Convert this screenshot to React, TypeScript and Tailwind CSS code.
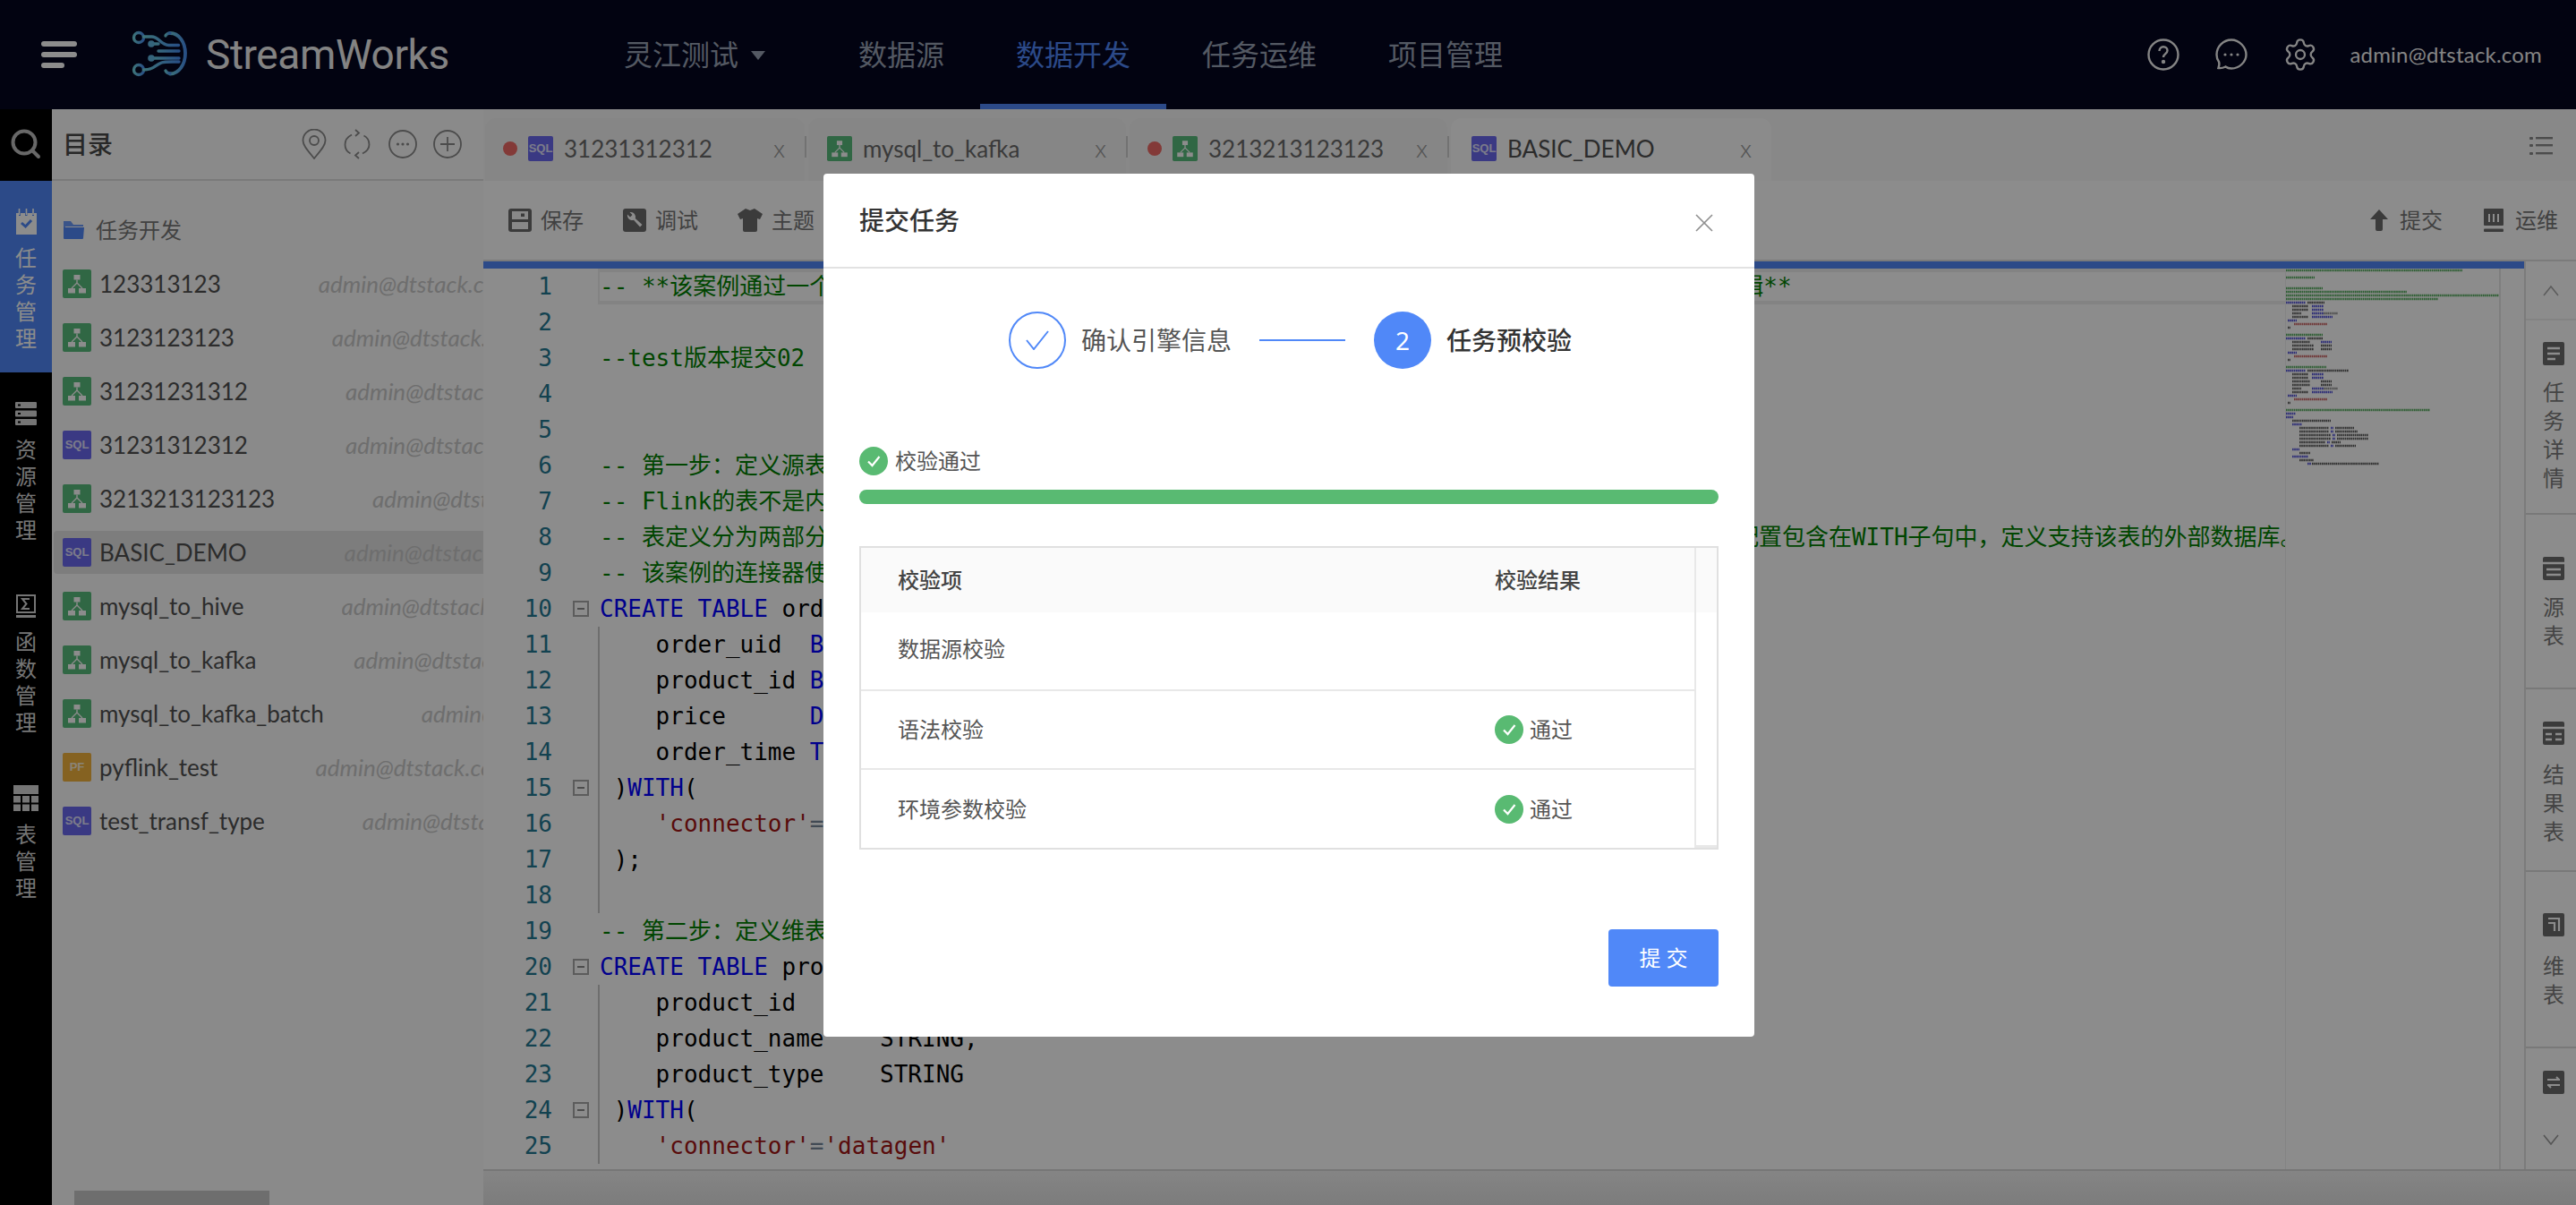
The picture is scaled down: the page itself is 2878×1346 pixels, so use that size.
import React from 'react';
import { Settings } from 'lucide-react';

type Seg = [string, string];

const C = 'text-[#008000]';
const K = 'text-[#0000ff]';
const S = 'text-[#a31515]';
const T = 'text-black';
const O = 'text-[#778899]';

const codeLines: { segs: Seg[]; fold?: boolean; guide?: boolean; active?: boolean }[] = [
  { segs: [['-- **该案例通过一个电商订单与商品维表关联后写入宽表的场景，并演示源表、维表、结果表的定义和转换逻辑**', C]], active: true },
  { segs: [] },
  { segs: [['--test版本提交02', C]] },
  { segs: [] },
  { segs: [] },
  { segs: [['-- 第一步：定义源表', C]] },
  { segs: [['-- Flink的表不是内部存储数据的，而是指向外部系统', C]] },
  { segs: [['-- 表定义分为两部分：逻辑结构与物理结构在同一条语句中声明，其中字段名称、类型和约束定义逻辑结构，配置包含在WITH子句中，定义支持该表的外部数据库。', C]] },
  { segs: [['-- 该案例的连接器使用datagen生成随机数据', C]] },
  { segs: [['CREATE TABLE', K], [' orders (', T]], fold: true },
  { segs: [['    order_uid  ', T], ['BIGINT', K], [',', T]], guide: true },
  { segs: [['    product_id ', T], ['BIGINT', K], [',', T]], guide: true },
  { segs: [['    price      ', T], ['DECIMAL', K], ['(32,2),', T]], guide: true },
  { segs: [['    order_time ', T], ['TIMESTAMP', K], ['(3)', T]], guide: true },
  { segs: [[' )', T], ['WITH', K], ['(', T]], fold: true, guide: true },
  { segs: [['    ', T], ["'connector'", S], ['=', O], ["'datagen'", S]], guide: true },
  { segs: [[' );', T]], guide: true },
  { segs: [], guide: true },
  { segs: [['-- 第二步：定义维表', C]] },
  { segs: [['CREATE TABLE', K], [' products (', T]], fold: true },
  { segs: [['    product_id     ', T], ['BIGINT', K], [',', T]], guide: true },
  { segs: [['    product_name    STRING,', T]], guide: true },
  { segs: [['    product_type    STRING', T]], guide: true },
  { segs: [[' )', T], ['WITH', K], ['(', T]], fold: true, guide: true },
  { segs: [['    ', T], ["'connector'", S], ['=', O], ["'datagen'", S]], guide: true },
];

const files: { name: string; mail: string; type: 'flow' | 'sql' | 'pf'; selected?: boolean }[] = [
  { name: '123313123', mail: 'admin@dtstack.com', type: 'flow' },
  { name: '3123123123', mail: 'admin@dtstack.com', type: 'flow' },
  { name: '31231231312', mail: 'admin@dtstack.com', type: 'flow' },
  { name: '31231312312', mail: 'admin@dtstack.com', type: 'sql' },
  { name: '3213213123123', mail: 'admin@dtstack.com', type: 'flow' },
  { name: 'BASIC_DEMO', mail: 'admin@dtstack.com', type: 'sql', selected: true },
  { name: 'mysql_to_hive', mail: 'admin@dtstack.com', type: 'flow' },
  { name: 'mysql_to_kafka', mail: 'admin@dtstack.com', type: 'flow' },
  { name: 'mysql_to_kafka_batch', mail: 'admin@dtstack.com', type: 'flow' },
  { name: 'pyflink_test', mail: 'admin@dtstack.com', type: 'pf' },
  { name: 'test_transf_type', mail: 'admin@dtstack.com', type: 'sql' },
];

const tabs = [
  { name: '31231312312', type: 'sql' as const, dot: true, w: 'w-[357px]' },
  { name: 'mysql_to_kafka', type: 'flow' as const, dot: false, w: 'w-[355px]' },
  { name: '3213213123123', type: 'flow' as const, dot: true, w: 'w-[355px]' },
];

// minimap rows: [line, startX, endX, colour], measured on the reference
const G = '#2f9a3a';
const B = '#2a2ad0';
const D = '#333333';
const R = '#c04040';
const miniRows: [number, number, number, string][] = [
  [1, 0, 197, G], [3, 0, 32, G], [6, 0, 41, G], [7, 0, 135, G], [8, 0, 238, G], [9, 0, 170, G],
  [10, 0, 22, B], [10, 24, 43, D], [11, 7, 25, D], [11, 29, 42, B], [12, 7, 25, D], [12, 29, 42, B],
  [13, 7, 17, D], [13, 29, 42, B], [13, 42, 58, '#777777'], [14, 7, 25, D], [14, 29, 52, B], [15, 2, 12, B],
  [16, 9, 46, R], [17, 2, 5, D], [19, 0, 41, G], [20, 0, 22, B], [20, 24, 41, D], [21, 7, 27, D], [21, 39, 51, B],
  [22, 7, 31, D], [22, 39, 51, D], [23, 7, 31, D], [23, 39, 51, D], [24, 2, 12, B], [25, 9, 46, R], [26, 2, 5, D],
  [28, 0, 45, G], [29, 0, 22, B], [29, 24, 70, D], [30, 7, 25, D], [30, 29, 42, B], [31, 7, 25, D], [31, 29, 42, B],
  [32, 7, 27, D], [32, 39, 51, D], [33, 7, 27, D], [33, 39, 51, D], [34, 7, 17, D], [34, 29, 42, B], [34, 42, 58, '#777777'],
  [35, 7, 25, D], [35, 29, 52, B], [36, 2, 12, B], [37, 9, 46, R], [38, 2, 5, D], [40, 0, 161, G], [41, 0, 11, B], [42, 0, 8, B],
  [43, 7, 50, D], [44, 7, 18, B], [45, 15, 48, D], [45, 50, 53, B], [45, 55, 76, D], [46, 15, 48, D], [46, 50, 53, B], [46, 55, 80, D],
  [47, 15, 50, D], [47, 52, 55, B], [47, 57, 92, D], [48, 15, 50, D], [48, 52, 55, B], [48, 57, 92, D], [49, 15, 44, D], [49, 46, 49, B], [49, 51, 61, D],
  [50, 15, 48, D], [50, 50, 53, B], [50, 55, 78, D], [51, 7, 15, B], [52, 15, 27, D], [53, 7, 25, B], [54, 15, 31, D], [55, 24, 28, B], [55, 29, 104, D],
];

function FlowIcon({ size = 'w-[32px] h-[32px]' }: { size?: string }) {
  return (
    <svg viewBox="0 0 32 32" className={`${size} shrink-0`}>
      <rect width="32" height="32" rx="2" fill="#58bc7c" />
      <g fill="#ffffff">
        <rect x="12.5" y="6" width="7" height="5.5" />
        <rect x="6" y="21" width="8" height="5.5" />
        <rect x="18" y="21" width="8" height="5.5" />
      </g>
      <path d="M16 11.5V15M16 15L10 21M16 15l6 6" stroke="#ffffff" strokeWidth="1.4" fill="none" />
    </svg>
  );
}

function BadgeIcon({ label, bg, size }: { label: string; bg: string; size: string }) {
  return (
    <span className={`${size} ${bg} shrink-0 rounded-[2px] flex items-center justify-center text-white/80 text-[13px] font-bold font-['Liberation_Sans',sans-serif]`}>
      {label}
    </span>
  );
}

function FileIcon({ type, small }: { type: 'flow' | 'sql' | 'pf'; small?: boolean }) {
  const size = small ? 'w-[28px] h-[28px]' : 'w-[32px] h-[32px]';
  if (type === 'flow') return <FlowIcon size={size} />;
  if (type === 'sql') return <BadgeIcon label="SQL" bg="bg-[#6b69ee]" size={size} />;
  return <BadgeIcon label="PF" bg="bg-[#f2b33d]" size={size} />;
}

function PassIcon() {
  return (
    <svg viewBox="0 0 32 32" className="w-[32px] h-[32px] shrink-0">
      <circle cx="16" cy="16" r="16" fill="#59ba72" />
      <path d="M10 16.5l4.5 4.5L22.5 11" stroke="#ffffff" strokeWidth="2.2" fill="none" />
    </svg>
  );
}

function VChars({ text, cls }: { text: string; cls: string }) {
  return (
    <div className={`flex flex-col items-center ${cls}`}>
      {text.split('').map((ch, i) => (
        <span key={i} className="h-[30px] leading-[30px] text-[24px]">{ch}</span>
      ))}
    </div>
  );
}

function RightChars({ text }: { text: string }) {
  return (
    <div className="flex flex-col items-center text-[#7d7d7d]">
      {text.split('').map((ch, i) => (
        <span key={i} className="h-[32px] leading-[32px] text-[24px]">{ch}</span>
      ))}
    </div>
  );
}

function RailItem({ icon, text, active, h }: { icon: React.ReactNode; text: string; active?: boolean; h: string }) {
  return (
    <div className={`${h} flex flex-col items-center pt-[31px] ${active ? 'bg-[#5088f8]' : ''}`}>
      <div className="h-[29px] flex items-center justify-center">{icon}</div>
      <VChars text={text} cls={`mt-[11px] ${active ? 'text-white' : 'text-[#d6d6d6]'}`} />
    </div>
  );
}

function ToolBtn({ icon, text }: { icon: React.ReactNode; text: string }) {
  return (
    <div className="flex items-center gap-[10px] text-[24px] text-[#777777]">
      {icon}
      <span>{text}</span>
    </div>
  );
}

function RightSection({ icon, text, h, gap }: { icon: React.ReactNode; text: string; h: string; gap: string }) {
  return (
    <div className={`${h} border-b-2 border-[#dcdcdc] flex flex-col items-center pl-[6px]`}>
      {icon}
      <div className={gap}><RightChars text={text} /></div>
    </div>
  );
}

const Logo = () => (
  <svg viewBox="0 0 80 70" className="w-[80px] h-[70px] shrink-0" fill="none">
    <defs>
      <linearGradient id="lg" x1="0" y1="0" x2="1" y2="0">
        <stop offset="0" stopColor="#6fd0de" />
        <stop offset="1" stopColor="#4a90f0" />
      </linearGradient>
    </defs>
    <g stroke="url(#lg)" strokeWidth="3.4" strokeLinecap="round">
      <circle cx="15" cy="16" r="5.5" />
      <path d="M20.5 15h9c8 0 10 9 19 9.5h11" />
      <path d="M29 23h8M37 31h23M29 39h31" />
      <circle cx="15" cy="52" r="5.5" />
      <path d="M20.5 52c12 0 12-5 20-8 4-1.5 10-1 19.5-1" />
      <path d="M50 11c10 0 17 10 17 22.500s-7 23-17 23" strokeWidth="3.800" />
      <path d="M50 11c-2.500 0-5 2-5 3M50 56c-2.500 0-4-1-5-3" />
    </g>
    <circle cx="29" cy="23" r="3.800" fill="#62b6e0" />
    <circle cx="29" cy="39" r="3.800" fill="#62b6e0" />
  </svg>
);

const iconDark = '#6c6c6c';
const latin = "font-['Lato','Noto_Sans_CJK_SC',sans-serif]";

export default function App() {
  return (
    <div className="relative w-full h-screen overflow-hidden flex flex-col bg-white font-['Noto_Sans','Noto_Sans_CJK_SC',sans-serif]">
      {/* Header */}
      <header className="h-[122px] shrink-0 bg-[#04061f] flex items-center pl-[46px] pr-[38px]">
        <div className="w-[40px] flex flex-col gap-[6px]">
          <span className="h-[6px] w-[40px] rounded-full bg-white" />
          <span className="h-[6px] w-[40px] rounded-full bg-white" />
          <span className="h-[6px] w-[26px] rounded-full bg-white" />
        </div>
        <div className="ml-[54px] flex items-center">
          <Logo />
          <span className="ml-[10px] w-[272px] text-[46px] tracking-[-0.4px] text-[#eeeeee] font-['Roboto',sans-serif] whitespace-nowrap">StreamWorks</span>
        </div>
        <div className="ml-[195px] flex items-center text-[32px] text-[#9aa3b5]">
          <span>灵江测试</span>
          <svg viewBox="0 0 16 10" className="w-[16px] h-[10px] ml-[14px] mt-[2px]"><path d="M0 0h16L8 10z" fill="#9aa3b5" /></svg>
        </div>
        <nav className="ml-[64px] flex h-full text-[32px] text-[#9aa3b5]">
          <div className="px-[40px] flex items-center">数据源</div>
          <div className="px-[40px] flex items-center border-b-[6px] border-[#5088f8] text-[#5088f8] pt-[6px]">数据开发</div>
          <div className="px-[40px] flex items-center">任务运维</div>
          <div className="px-[40px] flex items-center">项目管理</div>
        </nav>
        <div className="ml-auto flex items-center text-[#f0f0f0]">
          <svg viewBox="0 0 36 36" className="w-[36px] h-[36px]" fill="none" stroke="#f0f0f0" strokeWidth="2.400">
            <circle cx="18" cy="18" r="16.500" />
            <path d="M13.500 14c0-3 2-4.800 4.500-4.800s4.500 1.800 4.500 4.300c0 3.700-4.500 3.700-4.500 7.500" />
            <circle cx="18" cy="26" r="1" fill="#f0f0f0" />
          </svg>
          <svg viewBox="0 0 36 36" className="w-[36px] h-[36px] ml-[40px]" fill="none" stroke="#f0f0f0" strokeWidth="2.400">
            <path d="M18 1.500C9 1.500 1.500 9 1.500 18c0 3.500 1 6 2.500 8 .8 2 .2 5-.5 7 3 .5 6-.5 8-1.500 2 1.500 4 2 6.500 2 9 0 16.500-7.500 16.500-15.500S27 1.500 18 1.500z" />
            <g fill="#f0f0f0" stroke="none"><circle cx="11" cy="18" r="1.600" /><circle cx="18" cy="18" r="1.600" /><circle cx="25" cy="18" r="1.600" /></g>
          </svg>
          <Settings className="w-[40px] h-[40px] ml-[39px] text-[#f0f0f0]" strokeWidth={1.4} />
          <span className={`ml-[35px] text-[24px] tracking-[0.2px] ${latin}`}>admin@dtstack.com</span>
        </div>
      </header>

      <div className="flex flex-1 min-h-0">
        {/* Left rail */}
        <aside className="w-[58px] shrink-0 bg-black">
          <div className="h-[80px] flex items-center justify-center">
            <svg viewBox="0 0 34 34" className="w-[34px] h-[34px] mb-[3px]" fill="none" stroke="#bdbdbd" strokeWidth="4" strokeLinecap="round">
              <circle cx="15" cy="15" r="12.500" />
              <path d="M24 24l7 7" />
            </svg>
          </div>
          <RailItem
            active
            h="h-[214px]"
            text="任务管理"
            icon={
              <svg viewBox="0 0 23 29" className="w-[23px] h-[29px]">
                <path d="M0 5h3v3h2V5h5v3h2.500V5H18v3h2V5h3v24H0z" fill="#ffffff" />
                <path d="M3.500 0v7M11.500 0v7M19 0v7" stroke="#ffffff" strokeWidth="1.600" />
                <path d="M6 16l4.500 4L17 13" stroke="#5088f8" strokeWidth="3" fill="none" />
              </svg>
            }
          />
          <RailItem
            h="h-[215px]"
            text="资源管理"
            icon={
              <svg viewBox="0 0 24 26" className="w-[24px] h-[26px]" fill="#d6d6d6">
                <rect y="0" width="24" height="7" rx="1" /><rect y="9.500" width="24" height="7" rx="1" /><rect y="19" width="24" height="7" rx="1" />
                <g fill="#000000"><rect x="3" y="2.500" width="3" height="2" /><rect x="3" y="12" width="3" height="2" /><rect x="3" y="21.500" width="3" height="2" /></g>
              </svg>
            }
          />
          <RailItem
            h="h-[215px]"
            text="函数管理"
            icon={
              <svg viewBox="0 0 22 26" className="w-[22px] h-[26px]">
                <path d="M1 1h20v19H1z" fill="none" stroke="#d6d6d6" strokeWidth="2" />
                <rect x="0" y="23" width="22" height="3" fill="#d6d6d6" />
                <path d="M15 5H7l4.500 5.500L7 16h8" stroke="#d6d6d6" strokeWidth="2" fill="none" />
              </svg>
            }
          />
          <RailItem
            h="h-[184px]"
            text="表管理"
            icon={
              <svg viewBox="0 0 28 29" className="w-[28px] h-[29px]" fill="#d6d6d6">
                <rect width="28" height="10" />
                <rect y="12" width="8" height="7.500" /><rect x="10" y="12" width="8" height="7.500" /><rect x="20" y="12" width="8" height="7.500" />
                <rect y="21.500" width="8" height="7.500" /><rect x="10" y="21.500" width="8" height="7.500" /><rect x="20" y="21.500" width="8" height="7.500" />
              </svg>
            }
          />
        </aside>

        {/* Catalog */}
        <aside className="w-[482px] shrink-0 relative bg-[#fbfbfb] overflow-hidden flex flex-col">
          <div className="h-[80px] shrink-0 border-b-2 border-[#dedede] flex items-center pl-[12px] pr-[24px] mb-[25px]">
            <span className="text-[28px] font-medium text-[#4a4a4a]">目录</span>
            <div className="ml-auto flex items-center text-[#8a8a8a]">
              <svg viewBox="0 0 28 34" className="w-[28px] h-[34px]" fill="none" stroke="#8a8a8a" strokeWidth="1.800">
                <path d="M14 33C6 23 1.500 18 1.500 13a12.500 12.500 0 0125 0c0 5-4.500 10-12.500 20z" />
                <circle cx="14" cy="13" r="5" />
              </svg>
              <svg viewBox="0 0 30 34" className="w-[30px] h-[34px] ml-[19px]" fill="none" stroke="#8a8a8a" strokeWidth="1.800">
                <path d="M9 6.500C4 9 1.500 13 1.500 17.500c0 4 2 8 6 10M21 27.500c5-2.500 7.500-6.500 7.500-10 0-4-2-8-6-10" />
                <path d="M13 1l4 3.500-4 3.500M17 33l-4-3.500 4-3.500" />
              </svg>
              <svg viewBox="0 0 32 32" className="w-[32px] h-[32px] ml-[20px]" fill="none" stroke="#8a8a8a" strokeWidth="1.800">
                <circle cx="16" cy="16" r="15" />
                <g fill="#8a8a8a" stroke="none"><circle cx="10.500" cy="16" r="1.600" /><circle cx="16" cy="16" r="1.600" /><circle cx="21.500" cy="16" r="1.600" /></g>
              </svg>
              <svg viewBox="0 0 32 32" className="w-[32px] h-[32px] ml-[18px]" fill="none" stroke="#8a8a8a" strokeWidth="1.800">
                <circle cx="16" cy="16" r="15" />
                <path d="M16 8v16M8 16h16" />
              </svg>
            </div>
          </div>
          <div className="h-[60px] shrink-0 flex items-center pl-[12px] text-[24px] text-[#777777]">
            <svg viewBox="0 0 24 20" className="w-[24px] h-[20px] shrink-0 mr-[13px]">
              <path d="M1 0h8l3 4h11v2H3v12H1z" fill="#5088f8" opacity=".85" />
              <path d="M1 7h23l-1 12a1 1 0 01-1 1H2a1 1 0 01-1-1z" fill="#5088f8" />
            </svg>
            任务开发
          </div>
          {files.map((f) => (
            <div key={f.name} className="h-[60px] shrink-0 flex items-center pl-[2px]">
              <div className={`flex-1 min-w-0 h-[48px] pl-[10px] flex items-center rounded-l-[4px] whitespace-nowrap ${latin} ${f.selected ? 'bg-[#e4e4e4]' : ''}`}>
                <FileIcon type={f.type} />
                <span className="ml-[9px] shrink-0 text-[26px] text-[#505050]">{f.name}</span>
                <span className="ml-[109px] flex-1 min-w-0 overflow-hidden text-[26px] italic text-[#c8c8c8]">{f.mail}</span>
              </div>
            </div>
          ))}
          <div className="mt-auto ml-[25px] h-[16px] w-[218px] bg-[#c8c8c8]" />
        </aside>

        {/* Main */}
        <main className="flex-1 min-w-0 flex flex-col bg-white">
          <div className="h-[80px] shrink-0 bg-[#f7f7f7] flex items-end pl-[2px] gap-[4px] relative">
            {tabs.map((t) => (
              <div key={t.name} className={`${t.w} h-[70px] rounded-t-[12px] bg-[#f5f5f5] relative flex items-center pb-[2px] pl-[20px]`}>
                {t.dot ? <span className="w-[16px] h-[16px] rounded-full bg-[#ee6b66] mr-[12px] shrink-0" /> : <span className="w-[1px]" />}
                <FileIcon type={t.type} small />
                <span className={`ml-[12px] text-[26px] text-[#6a6a6a] whitespace-nowrap ${latin}`}>{t.name}</span>
                <span className="absolute right-[22px] top-[18px] text-[26px] font-light leading-[32px] text-[#9c9c9c]">x</span>
                <span className="absolute right-[-2px] top-[20px] h-[24px] w-[2px] bg-[#cfcfcf]" />
              </div>
            ))}
            <div className="w-[358px] h-[70px] rounded-t-[12px] bg-[#fdfdfd] relative flex items-center pb-[2px] pl-[23px]">
              <FileIcon type="sql" small />
              <span className={`ml-[12px] text-[26px] text-[#505050] whitespace-nowrap ${latin}`}>BASIC_DEMO</span>
              <span className="absolute right-[22px] top-[18px] text-[26px] font-light leading-[32px] text-[#9c9c9c]">x</span>
            </div>
            <svg viewBox="0 0 26 22" className="absolute right-[26px] top-[30px] w-[26px] h-[22px]" fill="#8a8a8a">
              <rect x="0" y="1" width="4" height="3" rx="1" /><rect x="7" y="1" width="19" height="2.400" />
              <rect x="0" y="9" width="4" height="3" rx="1" /><rect x="7" y="9" width="19" height="2.400" />
              <rect x="0" y="18" width="4" height="3" rx="1" /><rect x="7" y="18" width="19" height="2.400" />
            </svg>
          </div>

          <div className="h-[90px] shrink-0 border-b-2 border-[#e0e0e0] flex items-center pl-[28px] pr-[20px]">
            <div className="flex items-center gap-[44px]">
              <ToolBtn
                text="保存"
                icon={
                  <svg viewBox="0 0 26 26" className="w-[26px] h-[26px]">
                    <rect width="26" height="26" rx="3" fill={iconDark} />
                    <path d="M4 3h18v9H4z M4 15h18v8H4z" fill="#ffffff" fillOpacity=".95" />
                    <rect x="14" y="5.500" width="4" height="3.500" fill={iconDark} />
                  </svg>
                }
              />
              <ToolBtn
                text="调试"
                icon={
                  <svg viewBox="0 0 26 26" className="w-[26px] h-[26px]">
                    <rect width="26" height="26" rx="3" fill={iconDark} />
                    <path d="M5 6.500a5.500 5.500 0 007 6.300l7 7.700 2.500-2.500-7.700-7a5.500 5.500 0 00-6.300-7l3 3-2.500 2.500z" fill="#ffffff" />
                  </svg>
                }
              />
              <ToolBtn
                text="主题"
                icon={
                  <svg viewBox="0 0 28 26" className="w-[28px] h-[26px]">
                    <path d="M9 0l5 2 5-2 9 6-3 6-3-1v13a2 2 0 01-2 2H8a2 2 0 01-2-2V11l-3 1-3-6z" fill={iconDark} />
                  </svg>
                }
              />
            </div>
            <div className="ml-auto flex items-center gap-[46px]">
              <ToolBtn
                text="提交"
                icon={
                  <svg viewBox="0 0 20 24" className="w-[20px] h-[24px] mr-[3px]">
                    <path d="M10 0l10 11h-6v11a2 2 0 01-2 2H8a2 2 0 01-2-2V11H0z" fill={iconDark} />
                  </svg>
                }
              />
              <ToolBtn
                text="运维"
                icon={
                  <svg viewBox="0 0 22 26" className="w-[22px] h-[26px] mr-[3px]">
                    <rect width="22" height="19" rx="1" fill={iconDark} />
                    <path d="M6 6v9M11 6v9M16 6v9" stroke="#ffffff" strokeWidth="2" />
                    <rect y="22.500" width="22" height="3.500" rx="1" fill={iconDark} />
                  </svg>
                }
              />
            </div>
          </div>

          <div className="flex-1 min-h-0 flex">
            {/* Editor */}
            <div className="flex-1 min-w-0 flex flex-col border-t-[8px] border-[#5088f8]">
              <div className="flex-1 min-h-0 flex">
                <div className="flex-1 min-w-0 overflow-hidden font-['DejaVu_Sans_Mono','Noto_Sans_CJK_SC',monospace] text-[26px]">
                  {codeLines.map((line, i) => (
                    <div key={i} className="h-[40px] flex">
                      <span className="w-[77px] shrink-0 text-right leading-[40px] text-[#237893]">{i + 1}</span>
                      <span className="w-[51px] shrink-0 pl-[23px] flex items-center">
                        {line.fold && (
                          <span className="w-[18px] h-[18px] border-2 border-[#a8a8a8] flex items-center justify-center">
                            <span className="w-[8px] h-[2px] bg-[#8a8a8a]" />
                          </span>
                        )}
                      </span>
                      <span
                        className={`flex-1 min-w-0 overflow-hidden whitespace-pre border-l-2 ${
                          line.active
                            ? 'border-y-4 border-[#eeeeee] leading-[32px]'
                            : line.guide
                              ? 'border-[#c8c8c8] leading-[40px]'
                              : 'border-transparent leading-[40px]'
                        }`}
                      >
                        {line.segs.map((s, j) => (
                          <span key={j} className={s[1]}>{s[0]}</span>
                        ))}
                      </span>
                    </div>
                  ))}
                </div>
                <div className="w-[239px] shrink-0 bg-white border-l border-[#f0f0f0]">
                  <svg viewBox="0 0 239 1006" className="w-[239px] h-full" preserveAspectRatio="xMinYMin slice">
                    {miniRows.map((r, i) => (
                      <line
                        key={i}
                        x1={r[1]}
                        x2={r[2]}
                        y1={(r[0] - 1) * 4 + 2}
                        y2={(r[0] - 1) * 4 + 2}
                        stroke={r[3]}
                        strokeWidth="2.600"
                        strokeDasharray="1.600 0.600"
                        opacity=".8"
                      />
                    ))}
                  </svg>
                </div>
                <div className="w-[28px] shrink-0 border-l-2 border-[#e6e6e6]" />
              </div>
            </div>

            {/* Right panel */}
            <div className="w-[58px] shrink-0 border-l-2 border-[#e0e0e0] flex flex-col">
              <div className="h-[66px] shrink-0 border-b-2 border-[#efefef] flex items-center justify-center pt-[2px]">
                <svg viewBox="0 0 18 12" className="w-[18px] h-[12px]" fill="none" stroke="#a8a8a8" strokeWidth="1.600"><path d="M1 11L9 1l8 10" /></svg>
              </div>
              <RightSection
                h="h-[217px] shrink-0 pt-[24px]"
                gap="mt-[14px]"
                text="任务详情"
                icon={
                  <svg viewBox="0 0 24 26" className="w-[24px] h-[26px]">
                    <rect width="24" height="26" rx="2" fill={iconDark} />
                    <path d="M5 7h14M5 13h14M5 19h9" stroke="#ffffff" strokeWidth="2.500" />
                  </svg>
                }
              />
              <RightSection
                h="h-[195px] shrink-0 pt-[47px]"
                gap="mt-[14px]"
                text="源表"
                icon={
                  <svg viewBox="0 0 24 26" className="w-[24px] h-[26px]">
                    <rect width="24" height="26" rx="2" fill={iconDark} />
                    <path d="M0 7h24M4 14h16M4 20h16" stroke="#ffffff" strokeWidth="2.500" />
                  </svg>
                }
              />
              <RightSection
                h="h-[204px] shrink-0 pt-[36px]"
                gap="mt-[17px]"
                text="结果表"
                icon={
                  <svg viewBox="0 0 24 26" className="w-[24px] h-[26px]">
                    <rect width="24" height="26" rx="2" fill={iconDark} />
                    <path d="M0 7h24M3 14h7M14 14h7M3 20h7M14 20h7" stroke="#ffffff" strokeWidth="2.500" />
                  </svg>
                }
              />
              <RightSection
                h="h-[197px] shrink-0 pt-[46px]"
                gap="mt-[17px]"
                text="维表"
                icon={
                  <svg viewBox="0 0 24 26" className="w-[24px] h-[26px]">
                    <rect width="24" height="26" rx="2" fill={iconDark} />
                    <path d="M6 6h12v14M6 11h7v9" stroke="#ffffff" strokeWidth="2.200" fill="none" />
                  </svg>
                }
              />
              <div className="flex-1 flex flex-col items-center pt-[25px]">
                <svg viewBox="0 0 24 26" className="w-[24px] h-[26px] ml-[6px]">
                  <rect width="24" height="26" rx="2" fill={iconDark} />
                  <path d="M5 10h14M15 7l3 3M5 16h14M9 19l-3-3" stroke="#ffffff" strokeWidth="2" fill="none" />
                </svg>
                <svg viewBox="0 0 18 12" className="w-[18px] h-[12px] mt-[45px]" fill="none" stroke="#9a9a9a" strokeWidth="1.600"><path d="M1 1l8 10 8-10" /></svg>
              </div>
            </div>
          </div>

          <div className="h-[40px] shrink-0 border-t-2 border-[#d8d8d8] bg-linear-to-b from-[#f2f2f2] to-[#e2e2e2]" />
        </main>
      </div>

      {/* Modal overlay */}
      <div className="absolute inset-0 bg-black/45 flex items-start justify-center pt-[194px] pl-[2px]">
        <div className="w-[1040px] h-[964px] bg-white rounded-[4px] flex flex-col">
          <div className="h-[106px] shrink-0 border-b-2 border-[#e2e2e2] flex items-center pl-[40px] pr-[46px]">
            <span className="text-[28px] font-medium text-[#333333]">提交任务</span>
            <svg viewBox="0 0 20 20" className="ml-auto w-[20px] h-[20px] mt-[6px]" fill="none" stroke="#8f8f8f" strokeWidth="1.600"><path d="M1 1l18 18M19 1L1 19" /></svg>
          </div>
          <div className="px-[40px] pt-[48px] flex flex-col">
            <div className="h-[64px] flex items-center pl-[167px]">
              <span className="w-[64px] h-[64px] rounded-full border-2 border-[#5088f8] flex items-center justify-center shrink-0">
                <svg viewBox="0 0 26 22" className="w-[26px] h-[22px]" fill="none" stroke="#5088f8" strokeWidth="2"><path d="M1 11l8 10L25 1" /></svg>
              </span>
              <span className="ml-[17px] text-[28px] text-[#555555] w-[199px] whitespace-nowrap">确认引擎信息</span>
              <span className="w-[96px] h-[2px] bg-[#5088f8] shrink-0" />
              <span className="ml-[32px] w-[64px] h-[64px] rounded-full bg-[#5088f8] text-white text-[28px] flex items-center justify-center shrink-0">2</span>
              <span className="ml-[17px] text-[28px] font-medium text-[#333333] whitespace-nowrap">任务预校验</span>
            </div>

            <div className="mt-[87px] h-[32px] flex items-center text-[24px] text-[#555555]">
              <PassIcon />
              <span className="ml-[8px]">校验通过</span>
            </div>
            <div className="mt-[16px] h-[16px] rounded-full bg-[#59ba72]" />

            <div className="mt-[47px] h-[339px] border-2 border-[#e0e0e0] flex flex-col text-[24px] text-[#555555]">
              <div className="h-[72px] shrink-0 bg-[#fafafa] flex">
                <div className="w-[708px] pl-[41px] flex items-center text-[#444444] font-medium">校验项</div>
                <div className="flex-1 flex items-center text-[#444444] font-medium">校验结果</div>
                <div className="w-[25px] border-l-2 border-[#e8e8e8]" />
              </div>
              <div className="flex-1 min-h-0 flex">
                <div className="flex-1 min-w-0 flex flex-col">
                  <div className="h-[88px] border-b-2 border-[#e8e8e8] flex items-center pl-[41px] pb-[4px]">数据源校验</div>
                  <div className="h-[88px] border-b-2 border-[#e8e8e8] flex items-center">
                    <span className="w-[708px] pl-[41px]">语法校验</span>
                    <span className="flex items-center gap-[7px]"><PassIcon />通过</span>
                  </div>
                  <div className="flex-1 flex items-center">
                    <span className="w-[708px] pl-[41px]">环境参数校验</span>
                    <span className="flex items-center gap-[7px]"><PassIcon />通过</span>
                  </div>
                </div>
                <div className="w-[25px] shrink-0 border-l-2 border-[#e8e8e8] flex flex-col justify-end">
                  <span className="h-[3px] bg-[#e8e8e8]" />
                </div>
              </div>
            </div>

            <div className="mt-[89px] flex justify-end">
              <button className="w-[123px] h-[64px] rounded-[4px] bg-[#5088f8] text-white text-[24px]">提 交</button>
            </div>
          </div>
        </div>
      </div>
    </div>
  );
}
